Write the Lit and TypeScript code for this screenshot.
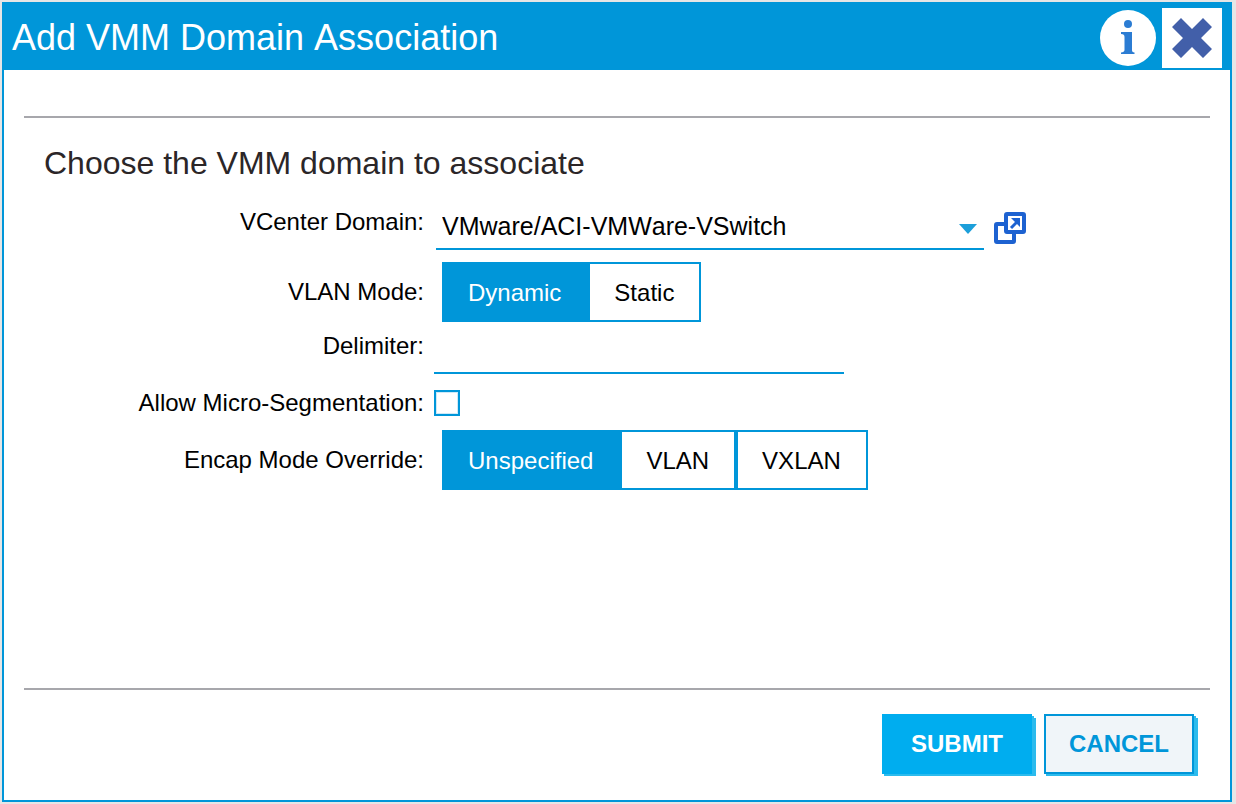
import { LitElement, html, css } from "lit";
import { customElement, property, state } from "lit/decorators.js";

@customElement("segmented-choice")
class SegmentedChoice extends LitElement {
  @property() name = "";
  @property() label = "";
  @property({ attribute: false }) options: string[] = [];
  @property() value = "";

  static styles = css`
    :host {
      display: inline-flex;
    }
    .group {
      display: flex;
      margin: 0;
      padding: 0;
      border: 0;
      min-width: 0;
    }
    .segment {
      position: relative;
      display: flex;
      align-items: center;
      box-sizing: border-box;
      height: 60px;
      padding: 2px 25px 0 24px;
      border: 2px solid #0096d9;
      background: #fff;
      color: #000;
      font-size: 24px;
      line-height: 32px;
      white-space: nowrap;
      cursor: pointer;
    }
    .segment.selected {
      background: #0096d9;
      color: #fff;
    }
    .segment:focus-within {
      z-index: 1;
    }
    .radio {
      position: absolute;
      inset: 0;
      width: 100%;
      height: 100%;
      margin: 0;
      opacity: 0;
      cursor: pointer;
    }
  `;

  render() {
    return html`
      <fieldset class="group" aria-label=${this.label}>
        ${this.options.map(
          (o) => html`
            <label class="segment ${o === this.value ? "selected" : ""}">
              <input
                class="radio"
                type="radio"
                name=${this.name}
                .value=${o}
                .checked=${o === this.value}
                @change=${() => (this.value = o)}
              />
              ${o}
            </label>
          `
        )}
      </fieldset>
    `;
  }
}

@customElement("app-root")
class AppRoot extends LitElement {
  @state() private microSegmentation = false;

  static styles = css`
    :host {
      display: flex;
      box-sizing: border-box;
      min-height: 100vh;
      padding: 2px 4px 2px 2px;
      background: #e6e6e6;
      font-family: "Liberation Sans", Arial, Helvetica, sans-serif;
      font-size: 24px;
      line-height: 32px;
      font-kerning: none;
      color: #000;
    }
    .dialog {
      flex: 1;
      min-width: 0;
      display: flex;
      flex-direction: column;
      border: 2px solid #0096d9;
      background: #fff;
    }
    .header {
      display: flex;
      align-items: center;
      gap: 6px;
      padding: 4px 8px 2px;
      background: #0096d9;
    }
    .title {
      flex: 1;
      margin: 0;
      font-size: 36px;
      line-height: 60px;
      font-weight: 400;
      color: #fff;
    }
    .icon-button {
      display: block;
      flex: none;
      padding: 0;
      border: 0;
      background: none;
      cursor: pointer;
    }
    .icon-button svg {
      display: block;
    }
    .close {
      background: #fff;
    }
    .body {
      flex: 1;
      margin: 46px 20px 0;
      padding: 24px 20px;
      border-top: 2px solid #a7a7ac;
      border-bottom: 2px solid #a7a7ac;
    }
    .heading {
      margin: 0 0 22px;
      font-size: 32px;
      line-height: 42px;
      font-weight: 400;
      color: #2b2628;
    }
    .form {
      display: flex;
      flex-direction: column;
      gap: 8px;
    }
    .row {
      display: grid;
      grid-template-columns: minmax(0, 380px) minmax(0, 1fr);
      column-gap: 10px;
    }
    .tall {
      min-height: 48px;
    }
    .centered {
      align-items: center;
    }
    .tick-row {
      min-height: 34px;
      padding-bottom: 2px;
    }
    .label {
      text-align: right;
    }
    .field {
      display: flex;
      align-items: flex-start;
      gap: 10px;
    }
    .indent {
      padding-left: 8px;
    }
    .domain {
      display: flex;
      align-items: center;
      gap: 10px;
      padding-left: 2px;
      height: 44px;
    }
    .select-box {
      flex: 0 1 548px;
      min-width: 0;
      height: 44px;
      display: grid;
      align-items: center;
    }
    .select {
      grid-area: 1 / 1;
      appearance: none;
      box-sizing: border-box;
      width: 100%;
      height: 44px;
      margin: 0;
      padding: 0 32px 2px 6px;
      border: 0;
      border-bottom: 2px solid #0096d9;
      border-radius: 0;
      background: #fff;
      color: #000;
      font: inherit;
      font-size: 25px;
      font-kerning: none;
    }
    .caret {
      grid-area: 1 / 1;
      justify-self: end;
      margin: 2px 6px 0;
      pointer-events: none;
    }
    .text {
      box-sizing: border-box;
      width: 410px;
      max-width: 100%;
      height: 44px;
      margin: 0;
      padding: 0 6px;
      border: 0;
      border-bottom: 2px solid #0096d9;
      border-radius: 0;
      background: #fff;
      color: #000;
      font: inherit;
      outline: none;
    }
    .tick {
      appearance: none;
      box-sizing: border-box;
      width: 26px;
      height: 26px;
      margin: 0;
      border: 2px solid #0096d9;
      border-radius: 0;
      background: #fff;
      box-shadow: inset 0 0 0 1px #cfe9f7;
    }
    .tick:checked {
      background: #0096d9;
      box-shadow: inset 0 0 0 4px #fff;
    }
    .footer {
      display: flex;
      justify-content: flex-end;
      gap: 12px;
      padding: 24px 36px 26px;
    }
    .action {
      box-sizing: border-box;
      min-width: 150px;
      height: 60px;
      padding: 0 12px;
      border: 2px solid #00adef;
      background: #00adef;
      box-shadow: 2px 2px 0 #2cbbed, 5px 3px 0 -1px #2cbbed;
      color: #fff;
      font: inherit;
      font-weight: 700;
      cursor: pointer;
    }
    .secondary {
      border-color: #0096d9;
      background: #f0f5f9;
      color: #0096d9;
    }
  `;

  render() {
    return html`
      <section class="dialog" role="dialog" aria-labelledby="title">
        <header class="header">
          <h1 class="title" id="title">Add VMM Domain Association</h1>
          <button class="icon-button" type="button" aria-label="Help">
            <svg width="56" height="56" viewBox="0 0 56 56">
              <circle cx="28" cy="28" r="28" fill="#fff" />
              <circle cx="28" cy="14" r="4" fill="#2b7cd3" />
              <path
                fill="#2b7cd3"
                d="M21 22H32V40c0 1.800.6 2.300 2.500 2.500V44H21v-1.500c2.200-.2 3.500-.7 3.500-2.500V27c0-2-.9-2.800-3.500-3z"
              />
            </svg>
          </button>
          <button class="icon-button close" type="button" aria-label="Close">
            <svg width="60" height="60" viewBox="0 0 60 60">
              <path
                fill="#425fa9"
                d="M19 10L30 21L41 10L50 19L39 30L50 41L41 50L30 39L19 50L10 41L21 30L10 19Z"
              />
            </svg>
          </button>
        </header>

        <main class="body">
          <h2 class="heading">Choose the VMM domain to associate</h2>
          <form class="form" @submit=${(e: Event) => e.preventDefault()}>
            <div class="row tall">
              <label class="label" for="domain">VCenter Domain:</label>
              <div class="domain">
                <div class="select-box">
                  <select class="select" id="domain">
                    <option>VMware/ACI-VMWare-VSwitch</option>
                  </select>
                  <svg class="caret" width="20" height="10" viewBox="0 0 20 10">
                    <path d="M1 0H19L10 10Z" fill="#1c9fda" />
                  </svg>
                </div>
                <button class="icon-button" type="button" aria-label="Open domain">
                  <svg width="32" height="32" viewBox="0 0 32 32" fill="none" stroke="#1d62d1">
                    <rect x="2" y="12" width="18" height="18" rx="1" stroke-width="4" />
                    <rect x="12" y="2" width="18" height="18" rx="1" stroke-width="4" fill="#fff" />
                    <path d="M17 16L23 10" stroke-width="3" />
                    <path d="M17 6H26V15L23 12L20 9Z" fill="#1d62d1" stroke="none" />
                  </svg>
                </button>
              </div>
            </div>

            <div class="row centered">
              <span class="label">VLAN Mode:</span>
              <div class="field indent">
                <segmented-choice
                  name="vlan"
                  label="VLAN Mode"
                  value="Dynamic"
                  .options=${["Dynamic", "Static"]}
                ></segmented-choice>
              </div>
            </div>

            <div class="row tall">
              <label class="label" for="delimiter">Delimiter:</label>
              <div class="field"><input class="text" id="delimiter" type="text" /></div>
            </div>

            <div class="row centered tick-row">
              <label class="label" for="micro">Allow Micro-Segmentation:</label>
              <div class="field">
                <input
                  class="tick"
                  id="micro"
                  type="checkbox"
                  .checked=${this.microSegmentation}
                  @change=${(e: Event) =>
                    (this.microSegmentation = (e.target as HTMLInputElement).checked)}
                />
              </div>
            </div>

            <div class="row centered">
              <span class="label">Encap Mode Override:</span>
              <div class="field indent">
                <segmented-choice
                  name="encap"
                  label="Encap Mode Override"
                  value="Unspecified"
                  .options=${["Unspecified", "VLAN", "VXLAN"]}
                ></segmented-choice>
              </div>
            </div>
          </form>
        </main>

        <footer class="footer">
          <button class="action" type="submit">SUBMIT</button>
          <button class="action secondary" type="button">CANCEL</button>
        </footer>
      </section>
    `;
  }
}
